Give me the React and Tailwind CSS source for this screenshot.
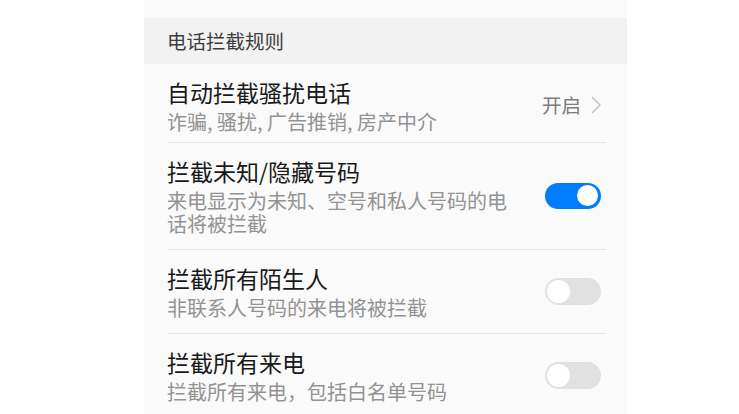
import React from "react";

const font = { fontFamily: '"Noto Sans CJK SC", "Noto Sans", sans-serif' };

function Toggle({ on }) {
  return on ? (
    <div className="w-[56px] h-[26px] rounded-full bg-[#007dff] flex items-center justify-end pr-[3px]">
      <div className="w-[21px] h-[21px] rounded-full bg-white" />
    </div>
  ) : (
    <div className="w-[56px] h-[27px] rounded-full bg-[#e1e1e1] flex items-center pl-[2px]">
      <div className="w-[23px] h-[23px] rounded-full bg-white" />
    </div>
  );
}

function Row({ title, sub, right, first, className }) {
  return (
    <div
      className={
        "mx-[21px] ml-[23px] flex items-center pr-[5px] " +
        (first ? "" : "border-t border-[#e6e6e6] ") +
        className
      }
    >
      <div className="flex-1 min-w-0 pr-[30px]">
        <div className="text-[23px] leading-[30px] text-[#191919]">{title}</div>
        <div className="mt-[3px] text-[20px] leading-[23px] text-[#939393]">{sub}</div>
      </div>
      {right}
    </div>
  );
}

export default function App() {
  return (
    <div className="bg-white h-[414px] overflow-hidden pl-[144px]" style={font}>
      <div className="w-[483px] bg-[#fafafa] pt-[18px] min-h-[414px]">
        <div className="h-[46px] bg-[#f2f2f2] px-[23px] flex items-center">
          <span className="text-[19.5px] text-[#3d3d3d] leading-none">电话拦截规则</span>
        </div>
        <Row
          first
          className="pt-[13px] pb-[9px]"
          title="自动拦截骚扰电话"
          sub="诈骗, 骚扰, 广告推销, 房产中介"
          right={
            <div className="flex items-center gap-[10px] text-[19.5px] text-[#7d7d7d]">
              <span>开启</span>
              <svg width="10" height="18" viewBox="0 0 10 18" fill="none">
                <polyline points="1,1 9,9 1,17" stroke="#c2c2c2" strokeWidth="1.5" />
              </svg>
            </div>
          }
        />
        <Row
          className="pt-[13px] pb-[14px]"
          title="拦截未知/隐藏号码"
          sub="来电显示为未知、空号和私人号码的电话将被拦截"
          right={<Toggle on />}
        />
        <Row
          className="pt-[13px] pb-[14px]"
          title="拦截所有陌生人"
          sub="非联系人号码的来电将被拦截"
          right={<Toggle />}
        />
        <Row
          className="pt-[13px] pb-[14px]"
          title="拦截所有来电"
          sub="拦截所有来电，包括白名单号码"
          right={<Toggle />}
        />
      </div>
    </div>
  );
}
